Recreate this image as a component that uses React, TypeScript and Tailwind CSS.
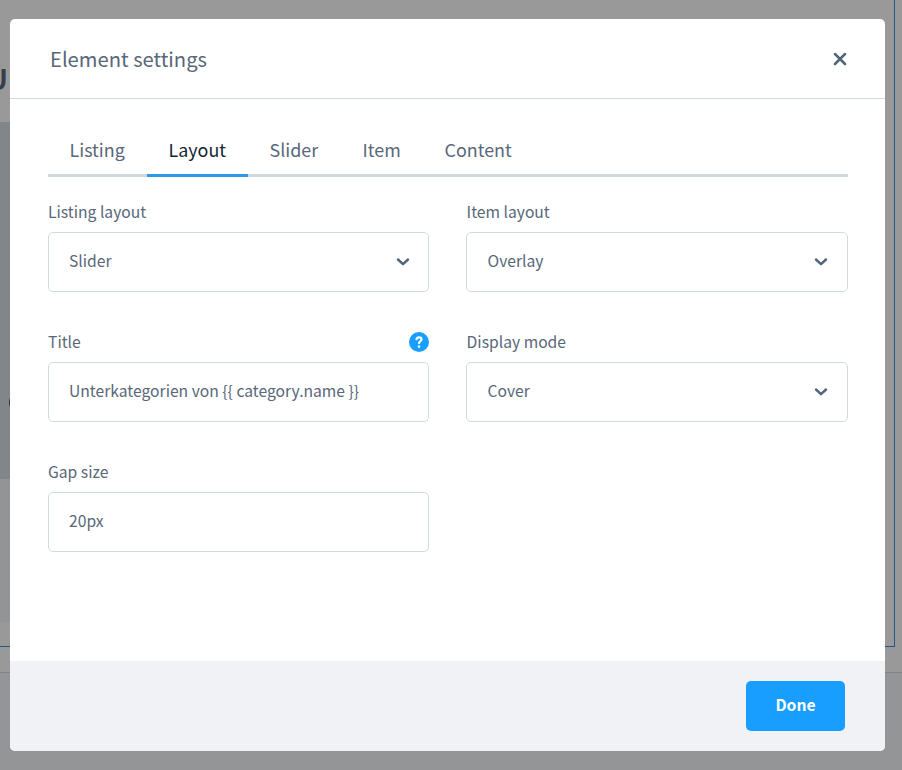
import React from "react";

const tabs = [
  { name: "Listing", size: "w-[99px] pl-[21.5px]" },
  { name: "Layout", size: "w-[101px] pl-[21.5px]", active: true },
  { name: "Slider", size: "w-[93px] pl-[21.5px]" },
  { name: "Item", size: "w-[82px] pl-[21.5px]" },
  { name: "Content", size: "w-[112px] pl-[21.5px]" },
];

function Chevron() {
  return (
    <svg width="14" height="10" viewBox="0 0 14 10" fill="none">
      <path d="M2 2.5 7 7.200l5-4.700" stroke="#52667a" strokeWidth="2.5" strokeLinecap="round" strokeLinejoin="round" />
    </svg>
  );
}

function HelpBadge() {
  return (
    <span className="mt-px flex h-5 w-5 items-center justify-center rounded-full bg-[#189eff]">
      <svg width="20" height="20" viewBox="0 0 20 20" fill="none">
        <path d="M7.500 7.200C7.800 5.800 8.700 5.300 10 5.300c1.500 0 2.500.9 2.500 2.100 0 1.800-2.400 1.900-2.400 3.700" stroke="#fff" strokeWidth="2.200" strokeLinecap="round" />
        <circle cx="10" cy="14.600" r="1.300" fill="#fff" />
      </svg>
    </span>
  );
}

type FieldProps = { label: string; value: string; select?: boolean; help?: boolean; right?: boolean };

function Field({ label, value, select, help, right }: FieldProps) {
  return (
    <div className="h-[130px]">
      <div className={`flex h-[31px] items-start justify-between text-[15.660px] leading-[22px] ${right ? "pl-[0.6px]" : ""}`}>
        <label>{label}</label>
        {help && <HelpBadge />}
      </div>
      <div
        className={`flex h-[60px] items-center justify-between rounded-[5px] border border-[#d1d9e0] bg-white text-[15.660px] leading-[22px] ${
          right ? "pr-[19px] pl-[20.6px]" : "pr-[18px] pl-5"
        }`}
      >
        <span className="-mt-[2px] whitespace-pre">{value}</span>
        {select && <Chevron />}
      </div>
    </div>
  );
}

export default function App() {
  return (
    <div className="relative h-[770px] w-[902px] overflow-hidden bg-[#999999] font-['Noto_Sans_CJK_SC',sans-serif] text-[#586779]">
      <div className="absolute inset-0 flex flex-col">
        <div className="flex h-[647px] w-[895px] flex-col border-r border-b border-[#22598a]">
          <div className="relative h-[122px]">
            <span className="absolute top-[58px] -left-[13px] text-[28px] leading-[40px] font-bold text-[#353f4b]">U</span>
          </div>
          <div className="relative h-[357px] w-[30px] bg-[#828589]">
            <span className="absolute top-[272px] left-[9px] h-[17px] w-4 rounded-full bg-[#333]" />
          </div>
          <div className="h-[143px] w-[30px] bg-[#939496]" />
        </div>
        <div className="h-[25px] shrink-0" />
        <div className="grow border-t border-[#808388] bg-[#949597]" />
      </div>

      <div className="relative mt-[19px] ml-[10px] flex h-[732px] w-[875px] flex-col overflow-hidden rounded-[5px] bg-white">
        <header className="flex h-20 items-center justify-between border-b border-[#d1d9e0] pr-[38px] pl-10">
          <h1 className="text-[20.200px] leading-[30px]">Element settings</h1>
          <svg width="14" height="14" viewBox="0 0 14 14" className="mt-px">
            <path d="M2 2l10 10M12 2 2 12" stroke="#52667a" strokeWidth="2.500" strokeLinecap="round" />
          </svg>
        </header>

        <main className="grow pt-[25px] pr-[37px] pl-[38px]">
          <nav className="flex h-[53px] border-b-[3px] border-[#d1d7de]">
            {tabs.map((tab) => (
              <div
                key={tab.name}
                className={`h-[53px] shrink-0 pt-[11px] text-[17.900px] leading-[28px] ${tab.size} ${
                  tab.active ? "border-b-[3px] border-[#2b99e6] text-[#142534]" : ""
                }`}
              >
                {tab.name}
              </div>
            ))}
          </nav>
          <div className="mt-[24px] grid grid-cols-[381px_382px] gap-x-[37px]">
            <Field label="Listing layout" value="Slider" select />
            <Field label="Item layout" value="Overlay" select right />
            <Field label="Title" value="Unterkategorien von {{ category.name }}" help />
            <Field label="Display mode" value="Cover" select right />
            <Field label="Gap size" value="20px" />
          </div>
        </main>

        <footer className="flex h-[90px] items-center justify-end bg-[#f0f2f5] pr-10">
          <button className="h-[50px] w-[99px] rounded-[5px] bg-[#189eff] pb-[2px] text-[15.700px] leading-[22px] font-bold text-white">
            Done
          </button>
        </footer>
      </div>
    </div>
  );
}
